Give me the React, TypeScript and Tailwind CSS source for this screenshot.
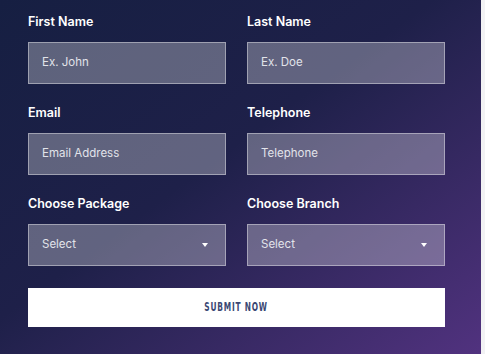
import React from 'react';

type Field = { label: string; placeholder: string; select?: boolean };

const ROWS: Field[][] = [
  [
    { label: 'First Name', placeholder: 'Ex. John' },
    { label: 'Last Name', placeholder: 'Ex. Doe' },
  ],
  [
    { label: 'Email', placeholder: 'Email Address' },
    { label: 'Telephone', placeholder: 'Telephone' },
  ],
  [
    { label: 'Choose Package', placeholder: 'Select', select: true },
    { label: 'Choose Branch', placeholder: 'Select', select: true },
  ],
];

const FormField: React.FC<{ field: Field }> = ({ field }) => (
  <div className="flex flex-col">
    <label className="h-[20px] mb-[10px] text-[12.5px] leading-[20px] font-semibold text-white">
      {field.label}
    </label>
    <div className="h-[42px] flex items-center justify-between px-[13px] bg-white/30 border border-white/40">
      <span className="text-[11.5px] text-[#e2e3ea]">{field.placeholder}</span>
      {field.select && (
        <svg width="6" height="4" viewBox="0 0 6 4" className="mr-[4px]">
          <path d="M0 0h6L3 4z" fill="#ffffff" />
        </svg>
      )}
    </div>
  </div>
);

const App: React.FC = () => {
  return (
    <div className="flex w-[485px] h-[354px] bg-[#f2f2f4] font-['Inter',sans-serif]">
      <div className="w-[481px] h-full pl-[28px] pt-[12px] bg-gradient-to-br from-[#161f42] via-[#1e2049] via-45% to-[#51327f]">
        <div className="w-[417px] flex flex-col gap-[19px]">
          {ROWS.map((row, i) => (
            <div key={i} className="grid grid-cols-[198px_198px] gap-x-[21px]">
              {row.map(f => (
                <FormField key={f.label} field={f} />
              ))}
            </div>
          ))}
        </div>
        <button className="mt-[22px] w-[417px] h-[39px] bg-white flex items-center justify-center">
          <span className="inline-block scale-x-[0.66] font-['DejaVu_Sans_Condensed',sans-serif] font-bold text-[12.5px] tracking-[1.2px] text-[#3a4773]">
            SUBMIT NOW
          </span>
        </button>
      </div>
    </div>
  );
};

export default App;
